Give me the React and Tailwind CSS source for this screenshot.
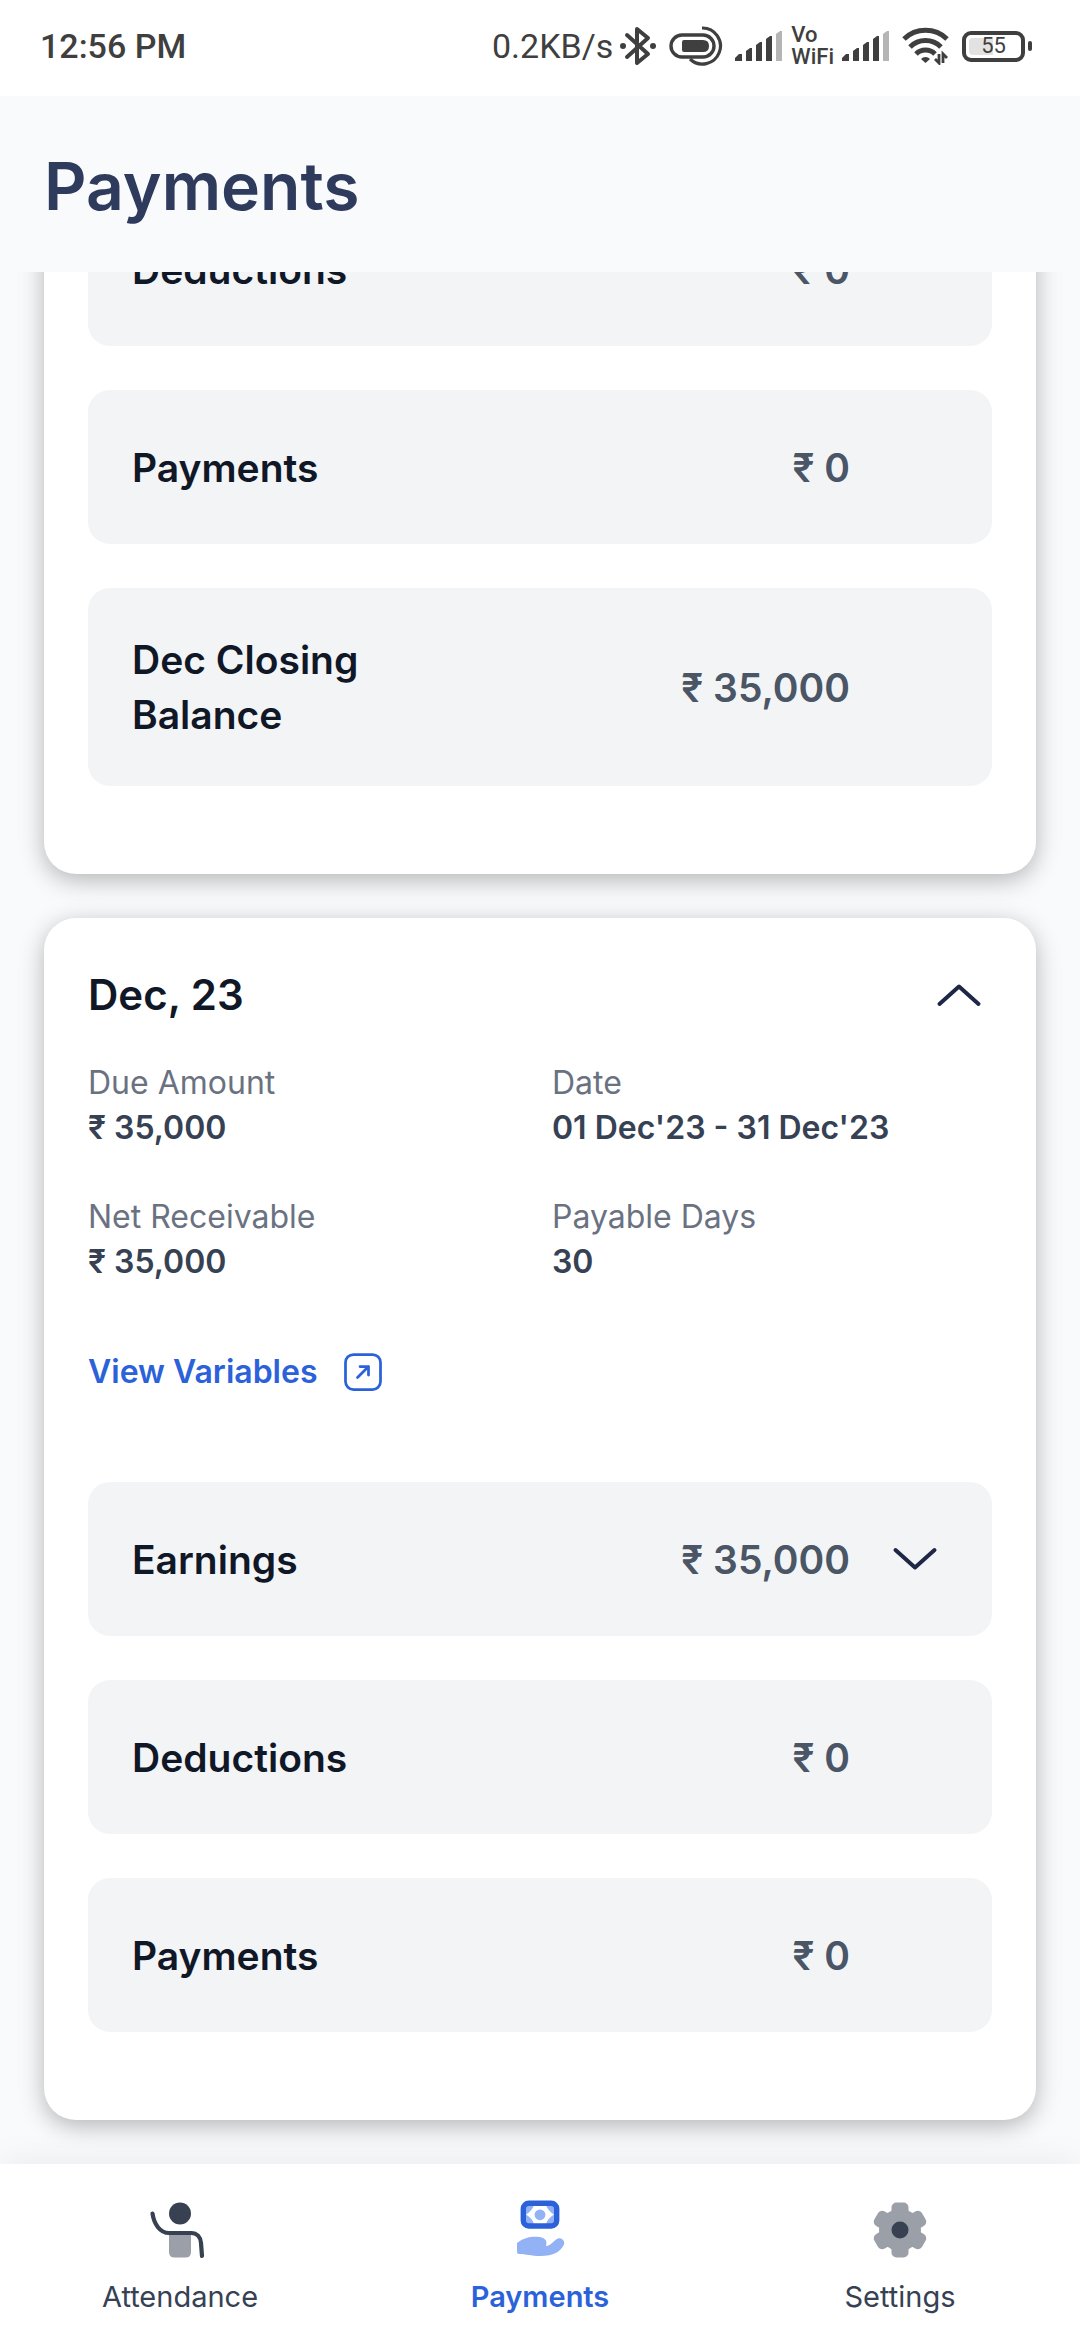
const DARK = "#3f3f3f";

function Bluetooth() {
  return (
    <svg width="38" height="40" viewBox="0 0 38 40" fill="none" stroke={DARK} strokeWidth="4" strokeLinejoin="round" strokeLinecap="round">
      <path d="M8 9 L29 28 L18 37 V3 L29 12 L8 31" />
      <circle cx="4" cy="20" r="3" fill={DARK} stroke="none" />
      <circle cx="34" cy="20" r="3" fill={DARK} stroke="none" />
    </svg>
  );
}

function PowerLoop() {
  return (
    <svg width="54" height="40" viewBox="0 0 54 40" fill="none" stroke={DARK}>
      <path d="M33 2 A18 18 0 1 1 21 33" strokeWidth="3.2" />
      <rect x="2" y="9" width="43" height="22" rx="11" strokeWidth="3.4" fill="#fff" />
      <path d="M15 14 H34 Q40 14 40 20 Q40 26 34 26 H15 Q13 26 13 24 V16 Q13 14 15 14 Z" fill={DARK} stroke="none" />
    </svg>
  );
}

function Signal() {
  return (
    <svg width="48" height="32" viewBox="0 0 48 32" fill={DARK}>
      <path d="M0 31 V28 L4 24 H7 V31 Z" />
      <path d="M11 31 V21 L15 18 H17 V31 Z" />
      <path d="M21 31 V15 L25 12 H27 V31 Z" />
      <path d="M31 31 V9 L35 6 H37 V31 Z" />
      <path d="M41 31 V4 L45 1 H47 V31 Z" fill="#b5b5b5" />
    </svg>
  );
}

function VoWifi() {
  return (
    <span className="flex flex-col text-[22px] leading-[22px] font-medium">
      <span>Vo</span>
      <span>WiFi</span>
    </span>
  );
}

function Wifi() {
  return (
    <svg width="48" height="38" viewBox="0 0 48 38" fill="none" stroke={DARK} strokeWidth="5">
      <path d="M2 12 A31 31 0 0 1 45 12" />
      <path d="M8 20 A22 22 0 0 1 39 20" />
      <path d="M14 27 A13.5 13.5 0 0 1 33 27" />
      <path d="M23.500 36 L19 32 A6 6 0 0 1 28 32 Z" fill={DARK} stroke="none" />
      <path d="M37 27 V36 L33 32 M41 36 V27 L45 31" strokeWidth="2.8" />
    </svg>
  );
}

function Battery() {
  return (
    <span className="flex items-center gap-[3px]">
      <span className="flex h-[31px] w-[63px] rounded-[9px] border-4 border-[#3f3f3f] p-[3px] text-[22px] leading-none">
        <span className="flex flex-1 items-center justify-center rounded-sm bg-linear-to-r from-[#e2e2e2] from-50% to-white to-50%">
          55
        </span>
      </span>
      <span className="h-[10px] w-[4px] rounded-sm bg-[#3f3f3f]" />
    </span>
  );
}

function StatusBar() {
  return (
    <div className="flex h-24 shrink-0 items-center justify-between bg-white pr-12 pb-1 pl-10 font-['Roboto',sans-serif] text-[34px] text-[#3f3f3f]">
      <span className="font-medium">12:56 PM</span>
      <div className="flex items-center">
        <span>0.2KB/s</span>
        <span className="ml-[6px] flex items-center gap-3">
          <Bluetooth />
          <PowerLoop />
          <Signal />
        </span>
        <span className="mr-2 ml-2">
          <VoWifi />
        </span>
        <span className="flex items-center gap-3">
          <Signal />
          <Wifi />
          <Battery />
        </span>
      </div>
    </div>
  );
}

function Chevron({ up }) {
  return (
    <svg width="66" height="66" viewBox="0 0 66 66" fill="none" stroke="#1e2746" strokeWidth="4" strokeLinecap="round" strokeLinejoin="round">
      <path d={up ? "M13.500 42 L33 24.500 L52.500 42" : "M13.500 24 L33 41.500 L52.500 24"} />
    </svg>
  );
}

function AmountRow({ title, amount, expandable }) {
  return (
    <div className="flex items-center rounded-[22px] bg-gray-100 p-11 text-[39px] leading-[55px]">
      <h3 className="w-[270px] font-semibold text-gray-900">{title}</h3>
      <span className="flex-1 text-right font-semibold text-gray-600">{amount}</span>
      {expandable ? (
        <button type="button" aria-label={`Expand ${title}`} className="ml-8">
          <Chevron />
        </button>
      ) : (
        <span className="ml-8 h-[66px] w-[66px] shrink-0" />
      )}
    </div>
  );
}

function Card({ children }) {
  return (
    <section className="flex shrink-0 flex-col rounded-[32px] bg-white px-11 pt-11 pb-[88px] shadow-[0_6px_24px_rgba(0,0,0,0.28)]">
      {children}
    </section>
  );
}

function Detail({ label, value }) {
  return (
    <div>
      <dt className="text-gray-500">{label}</dt>
      <dd className="font-semibold text-gray-700">{value}</dd>
    </div>
  );
}

function AttendanceIcon() {
  return (
    <svg width="66" height="66" viewBox="0 0 66 66" fill="none">
      <circle cx="33" cy="16.500" r="11" fill="#374151" />
      <path d="M22 36 H44 V55 Q44 60.500 38.500 60.500 H27.500 Q22 60.500 22 55 Z" fill="#9b9fa8" />
      <path d="M5.500 16.500 C7 27 13 36 22 36 H44 C50 36 53.500 40 54 46 L55 59" stroke="#374151" strokeWidth="4.200" strokeLinecap="round" />
    </svg>
  );
}

function PaymentsIcon() {
  return (
    <svg width="66" height="66" viewBox="0 0 66 66" fill="none">
      <rect x="18" y="8" width="30" height="19" fill="#93b1f5" />
      <path d="M27 8 H39 Q41 14 47 17.500 Q41 21 39 27 H27 Q25 21 19 17.500 Q25 14 27 8 Z" fill="#fff" />
      <circle cx="33" cy="17.800" r="5.400" fill="#93b1f5" />
      <rect x="16.300" y="6.300" width="33.400" height="22.700" rx="5.500" stroke="#2b62d9" strokeWidth="5.400" />
      <path d="M10 46 C18 40 25 39.500 30 39.800 C37 40 41 43 39 49 C44 49 47 43 51 41.500 C55 40.500 58 44 57 47.500 C53 55 47 59 33 59 C24 59 19 57 12 57 Q10 57 10 55 Z" fill="#93b1f5" />
    </svg>
  );
}

function SettingsIcon() {
  return (
    <svg width="66" height="66" viewBox="0 0 66 66">
      <g fill="#9b9fa8">
        <circle cx="33" cy="33" r="21" />
        <rect x="24.500" y="5.500" width="17" height="55" rx="5" />
        <rect x="24.500" y="5.500" width="17" height="55" rx="5" transform="rotate(60 33 33)" />
        <rect x="24.500" y="5.500" width="17" height="55" rx="5" transform="rotate(120 33 33)" />
      </g>
      <circle cx="33" cy="33" r="8.500" fill="#374151" />
    </svg>
  );
}

function Tab({ icon, label, active }) {
  return (
    <a href="#" aria-current={active ? "page" : undefined} className={active ? "flex flex-1 flex-col items-center gap-3 font-semibold text-[#2b62d9]" : "flex flex-1 flex-col items-center gap-3 text-gray-700"}>
      {icon}
      <span>{label}</span>
    </a>
  );
}

export default function App() {
  return (
    <div className="flex h-screen flex-col overflow-hidden bg-[#f8fafb] font-['Inter',sans-serif]">
      <StatusBar />
      <header className="z-10 flex h-44 shrink-0 items-center bg-[#f9fafc] px-11 pt-1">
        <h1 className="text-[66px] leading-[88px] font-semibold text-[#2f3b5c]">Payments</h1>
      </header>
      <main className="flex min-h-0 flex-1 flex-col justify-end gap-11 px-11 pb-11">
        <Card>
          <div className="flex flex-col gap-11">
            <AmountRow title="Deductions" amount="₹ 0" />
            <AmountRow title="Payments" amount="₹ 0" />
            <AmountRow title="Dec Closing Balance" amount="₹ 35,000" />
          </div>
        </Card>
        <Card>
          <div className="flex items-center justify-between">
            <h2 className="text-[42px] leading-[66px] font-semibold text-gray-900">Dec, 23</h2>
            <button type="button" aria-label="Collapse Dec, 23">
              <Chevron up />
            </button>
          </div>
          <dl className="mt-8 grid grid-cols-2 gap-x-6 gap-y-11 text-[32px] leading-[45px]">
            <Detail label="Due Amount" value="₹ 35,000" />
            <Detail label="Date" value="01 Dec'23 - 31 Dec'23" />
            <Detail label="Net Receivable" value="₹ 35,000" />
            <Detail label="Payable Days" value="30" />
          </dl>
          <a href="#" className="mt-[66px] flex items-center gap-6 self-start text-[32px] leading-[44px] font-semibold text-[#2b62d9]">
            View Variables
            <svg width="44" height="44" viewBox="0 0 44 44" fill="none" stroke="#2b62d9" strokeWidth="2.750" strokeLinecap="round" strokeLinejoin="round">
              <rect x="4.500" y="4.500" width="35" height="35" rx="8" />
              <path d="M16.500 27.500 L27.500 16.500 M19 16.500 H27.500 V25" />
            </svg>
          </a>
          <div className="mt-[88px] flex flex-col gap-11">
            <AmountRow title="Earnings" amount="₹ 35,000" expandable />
            <AmountRow title="Deductions" amount="₹ 0" />
            <AmountRow title="Payments" amount="₹ 0" />
          </div>
        </Card>
      </main>
      <nav className="z-10 flex h-44 shrink-0 items-center bg-white pt-3 text-[29px] leading-[44px] shadow-[0_-6px_30px_rgba(0,0,0,0.05)]">
        <Tab icon={<AttendanceIcon />} label="Attendance" />
        <Tab icon={<PaymentsIcon />} label="Payments" active />
        <Tab icon={<SettingsIcon />} label="Settings" />
      </nav>
    </div>
  );
}
